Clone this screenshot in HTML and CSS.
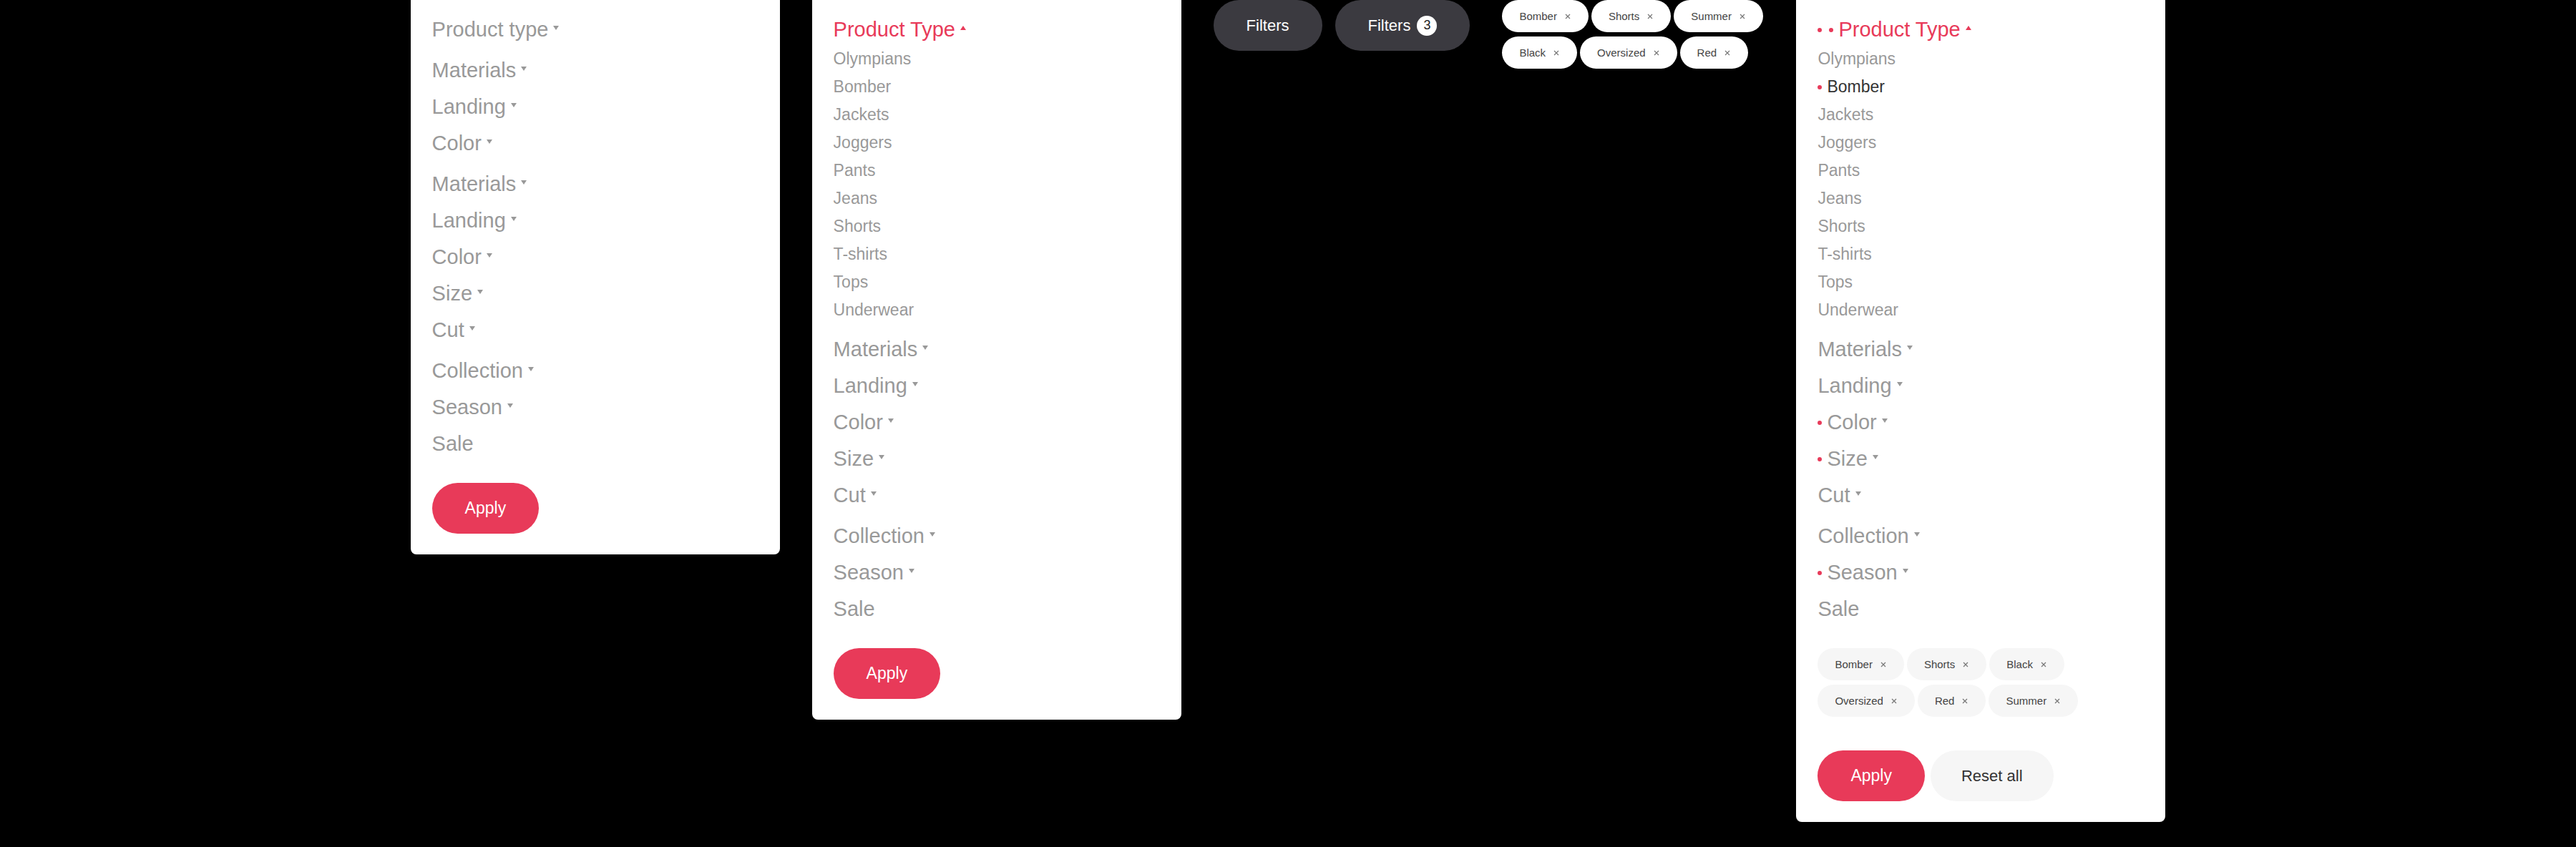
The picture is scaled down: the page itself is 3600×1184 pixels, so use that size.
FILE: index.html
```html
<!DOCTYPE html>
<html lang="en">
<head>
  <meta charset="UTF-8">
  <title>Filters</title>
  <link rel="stylesheet" href="styles.css">
</head>
<body>
<div class="stage">

  <div class="card">
    <div class="group">
      <div class="item">Product type<span class="caret"></span></div>
    </div>
    <div class="group">
      <div class="item">Materials<span class="caret"></span></div>
      <div class="item">Landing<span class="caret"></span></div>
      <div class="item">Color<span class="caret"></span></div>
    </div>
    <div class="group">
      <div class="item">Materials<span class="caret"></span></div>
      <div class="item">Landing<span class="caret"></span></div>
      <div class="item">Color<span class="caret"></span></div>
      <div class="item">Size<span class="caret"></span></div>
      <div class="item">Cut<span class="caret"></span></div>
    </div>
    <div class="group">
      <div class="item">Collection<span class="caret"></span></div>
      <div class="item">Season<span class="caret"></span></div>
      <div class="item">Sale</div>
    </div>
    <div class="actions">
      <button class="btn apply">Apply</button>
    </div>
  </div>

  <div class="card">
    <div class="group">
      <div class="item open">Product Type<span class="caret up"></span></div>
      <div class="sub">
        <div class="sub-item">Olympians</div>
        <div class="sub-item">Bomber</div>
        <div class="sub-item">Jackets</div>
        <div class="sub-item">Joggers</div>
        <div class="sub-item">Pants</div>
        <div class="sub-item">Jeans</div>
        <div class="sub-item">Shorts</div>
        <div class="sub-item">T-shirts</div>
        <div class="sub-item">Tops</div>
        <div class="sub-item">Underwear</div>
      </div>
    </div>
    <div class="group">
      <div class="item">Materials<span class="caret"></span></div>
      <div class="item">Landing<span class="caret"></span></div>
      <div class="item">Color<span class="caret"></span></div>
      <div class="item">Size<span class="caret"></span></div>
      <div class="item">Cut<span class="caret"></span></div>
    </div>
    <div class="group">
      <div class="item">Collection<span class="caret"></span></div>
      <div class="item">Season<span class="caret"></span></div>
      <div class="item">Sale</div>
    </div>
    <div class="actions">
      <button class="btn apply">Apply</button>
    </div>
  </div>

  <div class="toggles">
    <button class="btn dark">Filters</button>
    <button class="btn dark">Filters <span class="badge">3</span></button>
  </div>

  <div class="chips top">
    <span class="chip">Bomber<svg class="x" viewBox="0 0 8 8"><path d="M1 1L7 7M7 1L1 7"/></svg></span>
    <span class="chip">Shorts<svg class="x" viewBox="0 0 8 8"><path d="M1 1L7 7M7 1L1 7"/></svg></span>
    <span class="chip">Summer<svg class="x" viewBox="0 0 8 8"><path d="M1 1L7 7M7 1L1 7"/></svg></span>
    <span class="chip">Black<svg class="x" viewBox="0 0 8 8"><path d="M1 1L7 7M7 1L1 7"/></svg></span>
    <span class="chip">Oversized<svg class="x" viewBox="0 0 8 8"><path d="M1 1L7 7M7 1L1 7"/></svg></span>
    <span class="chip">Red<svg class="x" viewBox="0 0 8 8"><path d="M1 1L7 7M7 1L1 7"/></svg></span>
  </div>

  <div class="card">
    <div class="group">
      <div class="item open"><span class="dot"></span><span class="dot"></span>Product Type<span class="caret up"></span></div>
      <div class="sub">
        <div class="sub-item">Olympians</div>
        <div class="sub-item on"><span class="dot"></span>Bomber</div>
        <div class="sub-item">Jackets</div>
        <div class="sub-item">Joggers</div>
        <div class="sub-item">Pants</div>
        <div class="sub-item">Jeans</div>
        <div class="sub-item">Shorts</div>
        <div class="sub-item">T-shirts</div>
        <div class="sub-item">Tops</div>
        <div class="sub-item">Underwear</div>
      </div>
    </div>
    <div class="group">
      <div class="item">Materials<span class="caret"></span></div>
      <div class="item">Landing<span class="caret"></span></div>
      <div class="item"><span class="dot"></span>Color<span class="caret"></span></div>
      <div class="item"><span class="dot"></span>Size<span class="caret"></span></div>
      <div class="item">Cut<span class="caret"></span></div>
    </div>
    <div class="group">
      <div class="item">Collection<span class="caret"></span></div>
      <div class="item"><span class="dot"></span>Season<span class="caret"></span></div>
      <div class="item">Sale</div>
    </div>
    <div class="chips inside">
      <span class="chip">Bomber<svg class="x" viewBox="0 0 8 8"><path d="M1 1L7 7M7 1L1 7"/></svg></span>
      <span class="chip">Shorts<svg class="x" viewBox="0 0 8 8"><path d="M1 1L7 7M7 1L1 7"/></svg></span>
      <span class="chip">Black<svg class="x" viewBox="0 0 8 8"><path d="M1 1L7 7M7 1L1 7"/></svg></span>
      <span class="chip">Oversized<svg class="x" viewBox="0 0 8 8"><path d="M1 1L7 7M7 1L1 7"/></svg></span>
      <span class="chip">Red<svg class="x" viewBox="0 0 8 8"><path d="M1 1L7 7M7 1L1 7"/></svg></span>
      <span class="chip">Summer<svg class="x" viewBox="0 0 8 8"><path d="M1 1L7 7M7 1L1 7"/></svg></span>
    </div>
    <div class="actions wide">
      <button class="btn apply">Apply</button>
      <button class="btn reset">Reset all</button>
    </div>
  </div>

</div>
</body>
</html>
```

FILE: styles.css
```css
html,body{
  margin:0;
  height:100%;
  background:#000;
}
body{
  font-family:"Liberation Sans",Arial,sans-serif;
}
.stage{
  display:flex;
  justify-content:center;
  align-items:flex-start;
  gap:45px;
}

/* filter panel */
.card{
  width:516px;
  box-sizing:border-box;
  background:#fff;
  border-radius:0 0 8px 8px;
  padding:16px 30px 29px;
}
.group + .group{
  margin-top:6px;
}
.item{
  display:flex;
  align-items:center;
  height:51px;
  font-size:29px;
  color:#999;
  white-space:nowrap;
}
.item.open{
  color:#e83a59;
}
.caret{
  width:0;
  height:0;
  border-left:4px solid transparent;
  border-right:4px solid transparent;
  border-top:6px solid #999;
  margin:0 0 5px 7px;
}
.caret.up{
  border-top:0;
  border-bottom:6px solid #e83a59;
}
.sub{
  margin-top:-4px;
  padding-bottom:4px;
}
.sub-item{
  display:flex;
  align-items:center;
  height:39px;
  font-size:23px;
  color:#999;
}
.sub-item.on{
  color:#333;
}
.dot{
  width:6px;
  height:6px;
  border-radius:50%;
  background:#e83a59;
  margin-right:7px;
  flex:none;
}
.dot + .dot{
  margin-left:3px;
}

/* buttons */
.actions{
  display:flex;
  gap:8px;
  margin-top:29px;
}
.actions.wide{
  margin-top:47px;
}
.btn{
  display:inline-flex;
  align-items:center;
  justify-content:center;
  height:71px;
  padding:0 46px;
  border:0;
  border-radius:36px;
  font-family:inherit;
  font-size:23px;
  cursor:pointer;
}
.btn.apply{
  background:#e83a59;
  color:#fff;
}
.btn.reset{
  background:#f6f6f6;
  color:#333;
  font-size:22px;
  padding:0 43px;
}
.toggles{
  display:flex;
  gap:18px;
}
.btn.dark{
  background:#3b3a40;
  color:#fff;
  font-size:22px;
}
.badge{
  display:inline-flex;
  align-items:center;
  justify-content:center;
  width:28px;
  height:28px;
  margin-left:9px;
  border-radius:50%;
  background:#fff;
  color:#222;
  font-size:18px;
}

/* chips */
.chips{
  display:flex;
  flex-wrap:wrap;
  gap:6px 4px;
}
.chips.top{
  width:366px;
}
.chips.inside{
  margin-top:29px;
}
.chip{
  display:inline-flex;
  align-items:center;
  height:45px;
  padding:0 25px 0 24px;
  border-radius:23px;
  background:#fff;
  color:#444;
  font-size:15px;
  box-sizing:border-box;
}
.chips.inside .chip{
  background:#f6f6f6;
}
.x{
  width:8px;
  height:8px;
  margin-left:11px;
  fill:none;
  stroke:#777;
  stroke-width:1.2;
}
```
